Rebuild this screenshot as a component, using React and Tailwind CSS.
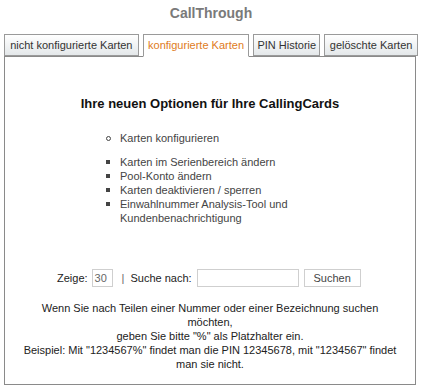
import React from 'react';

const tabs = [
  { label: 'nicht konfigurierte Karten', w: 'w-[135px]', active: false },
  { label: 'konfigurierte Karten', w: 'w-[107px]', active: true },
  { label: 'PIN Historie', w: 'w-[67px]', active: false },
  { label: 'gelöschte Karten', w: 'w-[94px]', active: false },
];

export default function App() {
  return (
    <div className="w-[422px] h-[391px] bg-white text-[#333] font-['Liberation_Sans',Arial,sans-serif] text-[11px]">
      {/* titel */}
      <div className="h-[34px] pt-[4px] text-center text-[14px] leading-[18px] font-bold text-[#7a7a7a]">
        CallThrough
      </div>

      {/* tabs */}
      <div className="flex items-end px-[4px] gap-[4px] relative z-10">
        {tabs.map((t) => (
          <div
            key={t.label}
            className={`${t.w} h-[22px] flex items-center justify-center border border-[#9a9a9a] text-[11px] whitespace-nowrap ${t.active
              ? 'bg-white border-b-white text-[#e07b22] h-[23px] -mb-px'
              : 'bg-gradient-to-b from-white to-[#e4e8ea] text-[#333]'
              }`}
          >
            {t.label}
          </div>
        ))}
      </div>

      {/* inhalt */}
      <div className="mx-[4px] w-[412px] h-[329px] border border-[#8a8a8a]">
        <h2 className="pt-[39px] text-center text-[13px] leading-[16px] font-bold text-[#111]">
          Ihre neuen Optionen für Ihre CallingCards
        </h2>

        <div className="mt-[19px] pl-[101px] leading-[14px] text-[#444]">
          <div className="flex items-center">
            <span className="w-[5px] h-[5px] rounded-full border border-[#444] mr-[9px]" />
            Karten konfigurieren
          </div>
          <ul className="mt-[10px]">
            {[
              'Karten im Serienbereich ändern',
              'Pool-Konto ändern',
              'Karten deaktivieren / sperren',
              'Einwahlnummer Analysis-Tool und Kundenbenachrichtigung',
            ].map((s) => (
              <li key={s} className="flex">
                <span className="shrink-0 w-[4px] h-[4px] bg-[#444] mt-[5px] mr-[10px]" />
                <span className="w-[180px]">{s}</span>
              </li>
            ))}
          </ul>
        </div>

        {/* suche */}
        <div className="mt-[44px] flex items-center pl-[52px] text-[11px] text-[#222]">
          <span>Zeige:</span>
          <div className="ml-[4px] w-[21px] h-[18px] border border-[#cfcfcf] text-[#666] pl-[2px] leading-[16px]">30</div>
          <span className="ml-[9px] text-[#666]">|</span>
          <span className="ml-[6px]">Suche nach:</span>
          <div className="ml-[5px] w-[102px] h-[18px] border border-[#cfcfcf]" />
          <div className="ml-[5px] w-[57px] h-[18px] border border-[#cfcfcf] flex items-center justify-center text-[#444]">
            Suchen
          </div>
        </div>

        <div className="mt-[14px] text-center leading-[14px] text-[#222]">
          <p className="px-[20px]">
            Wenn Sie nach Teilen einer Nummer oder einer Bezeichnung suchen möchten,
            <br />
            geben Sie bitte "%" als Platzhalter ein.
          </p>
          <p className="px-[14px]">
            Beispiel: Mit "1234567%" findet man die PIN 12345678, mit "1234567" findet man sie nicht.
          </p>
        </div>
      </div>
    </div>
  );
}
